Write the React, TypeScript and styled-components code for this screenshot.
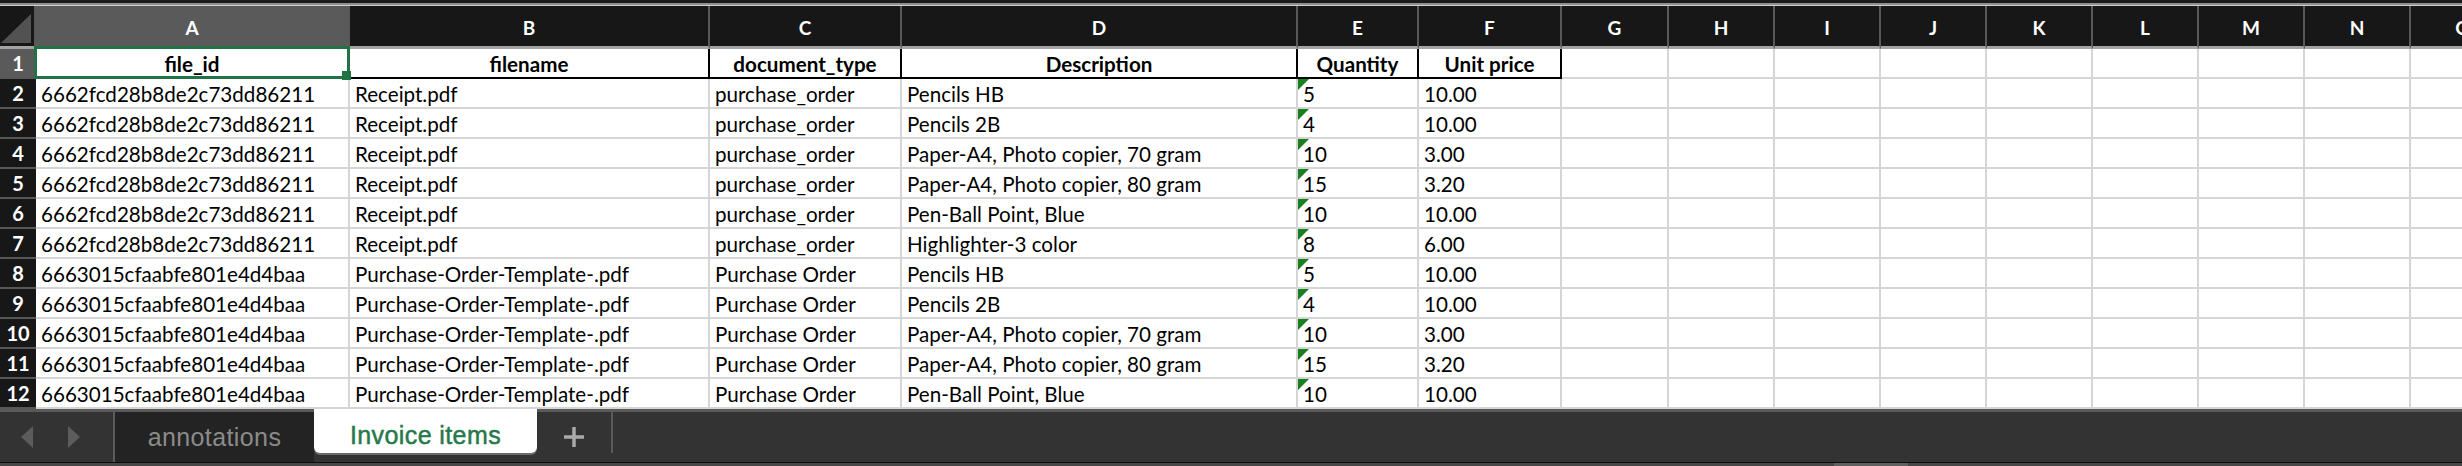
import React from "react";
import styled, { createGlobalStyle, css } from "styled-components";

const GlobalStyle = createGlobalStyle`
  *, *::before, *::after { box-sizing: border-box; }
  html, body { margin: 0; padding: 0; background: #333333; }
  body { width: 2462px; height: 466px; overflow: hidden; }
  #root { width: 2462px; height: 466px; }
`;

const Window = styled.div`
  display: flex;
  flex-direction: column;
  width: 2462px;
  height: 466px;
  overflow: hidden;
  background: #333333;
`;

const TopEdge = styled.div`
  flex: none;
  height: 6px;
  background: linear-gradient(#1b1b1b 0 3px, #8f8f8f 3px 5px, #cfcfcf 5px 6px);
`;

const Grid = styled.div`
  flex: none;
  display: grid;
  width: max-content;
  grid-template-columns: 36px 314px 360px 192px 396px 121px 143px 107px repeat(8, 106px);
  grid-template-rows: 43px repeat(12, 30px);
  background: #ffffff;
  font-family: Lato, "Noto Sans", sans-serif;
`;

const Corner = styled.div`
  display: flex;
  align-items: flex-end;
  justify-content: flex-end;
  padding: 0 3px 3px 0;
  background: #171717;
  border-right: 2px solid #595959;
  border-bottom: 3px solid #a3a3a3;
`;

const CornerMark = styled.span`
  width: 30px;
  height: 29px;
  background: #525252;
  clip-path: polygon(100% 0, 100% 100%, 0 100%);
`;

const ColHead = styled.div<{ $active?: boolean }>`
  display: flex;
  align-items: center;
  justify-content: center;
  padding-top: 2px;
  background: ${(p) => (p.$active ? "#5a5a5a" : "#171717")};
  color: #ffffff;
  font-size: 19px;
  font-weight: 700;
  border-right: 2px solid #595959;
  border-bottom: 3px solid ${(p) => (p.$active ? "#217346" : "#a3a3a3")};
`;

const RowHead = styled.div<{ $active?: boolean }>`
  display: flex;
  align-items: center;
  justify-content: center;
  background: ${(p) => (p.$active ? "#5a5a5a" : "#171717")};
  color: #ffffff;
  font-size: 20px;
  font-weight: 700;
  border-bottom: 2px solid #575757;
`;

const Cell = styled.div<{ $head?: boolean; $flag?: boolean; $selected?: boolean }>`
  position: relative;
  display: flex;
  align-items: center;
  padding: 1px 0 0 5px;
  white-space: nowrap;
  color: #000000;
  font-size: 20.6px;
  border-right: 2px solid #d5d5d5;
  border-bottom: 2px solid #d5d5d5;

  ${(p) =>
    p.$head &&
    css`
      justify-content: center;
      padding-left: 0;
      font-weight: 700;
      border-right-color: #000000;
      border-bottom-color: #000000;
    `}

  ${(p) =>
    p.$flag &&
    css`
      &::before {
        content: "";
        position: absolute;
        left: 0;
        top: 0;
        width: 11px;
        height: 11px;
        background: #1a7f1f;
        clip-path: polygon(0 0, 100% 0, 0 100%);
      }
    `}

  ${(p) =>
    p.$selected &&
    css`
      z-index: 3;
      &::after {
        content: "";
        position: absolute;
        left: -2px;
        top: -3px;
        right: -2px;
        bottom: -2px;
        border: 3px solid #217346;
      }
      &::before {
        content: "";
        position: absolute;
        right: -3px;
        bottom: -3px;
        width: 9px;
        height: 9px;
        background: #217346;
        z-index: 1;
      }
    `}
`;

const TabBar = styled.div`
  flex: none;
  box-sizing: content-box;
  height: 50px;
  display: flex;
  align-items: stretch;
  background: #333333;
  border-top: 3px solid #5a5a5a;
  border-bottom: 1px solid #0d0d0d;
  font-family: "Liberation Sans", Arial, sans-serif;
  font-size: 25px;
  letter-spacing: 0.4px;
`;

const Nav = styled.div`
  flex: none;
  width: 115px;
  display: flex;
  align-items: center;
  gap: 35px;
  padding-left: 21px;
  border-right: 2px solid #5a5a5a;
`;

const Arrow = styled.span<{ $dir: "left" | "right" }>`
  width: 12px;
  height: 22px;
  background: #5c5c5c;
  clip-path: ${(p) =>
    p.$dir === "left"
      ? "polygon(100% 0, 100% 100%, 0 50%)"
      : "polygon(0 0, 100% 50%, 0 100%)"};
`;

const Tab = styled.div`
  flex: none;
  width: 199px;
  display: flex;
  align-items: center;
  justify-content: center;
  background: #232323;
  color: #8b8b8b;
`;

const ActiveTab = styled.div`
  flex: none;
  width: 223px;
  height: 44px;
  margin-top: -3px;
  align-self: flex-start;
  display: flex;
  align-items: center;
  justify-content: center;
  padding-top: 9px;
  background: #ffffff;
  color: #26794a;
  -webkit-text-stroke: 0.5px #26794a;
  border-radius: 0 0 6px 6px;
  box-shadow: 0 2px 0 #6a6a6a;
`;

const AddButton = styled.div`
  flex: none;
  width: 76px;
  height: 41px;
  align-self: flex-start;
  display: flex;
  align-items: center;
  justify-content: center;
  padding-top: 9px;
  border-right: 2px solid #5a5a5a;
`;

const ScrollStrip = styled.div`
  flex: none;
  height: 3px;
  background: #474747;
  display: flex;
`;

const Thumb = styled.div`
  width: 74px;
  margin-left: 1834px;
  background: #606060;
`;

const letters = ["A", "B", "C", "D", "E", "F", "G", "H", "I", "J", "K", "L", "M", "N", "O"];
const headers = ["file_id", "filename", "document_type", "Description", "Quantity", "Unit price"];

const idA = "6662fcd28b8de2c73dd86211";
const idB = "6663015cfaabfe801e4d4baa";
const tpl = "Purchase-Order-Template-.pdf";

const rows: string[][] = [
  [idA, "Receipt.pdf", "purchase_order", "Pencils HB", "5", "10.00"],
  [idA, "Receipt.pdf", "purchase_order", "Pencils 2B", "4", "10.00"],
  [idA, "Receipt.pdf", "purchase_order", "Paper-A4, Photo copier, 70 gram", "10", "3.00"],
  [idA, "Receipt.pdf", "purchase_order", "Paper-A4, Photo copier, 80 gram", "15", "3.20"],
  [idA, "Receipt.pdf", "purchase_order", "Pen-Ball Point, Blue", "10", "10.00"],
  [idA, "Receipt.pdf", "purchase_order", "Highlighter-3 color", "8", "6.00"],
  [idB, tpl, "Purchase Order", "Pencils HB", "5", "10.00"],
  [idB, tpl, "Purchase Order", "Pencils 2B", "4", "10.00"],
  [idB, tpl, "Purchase Order", "Paper-A4, Photo copier, 70 gram", "10", "3.00"],
  [idB, tpl, "Purchase Order", "Paper-A4, Photo copier, 80 gram", "15", "3.20"],
  [idB, tpl, "Purchase Order", "Pen-Ball Point, Blue", "10", "10.00"],
];

const blankCount = letters.length - headers.length;

function Blanks() {
  return (
    <>
      {Array.from({ length: blankCount }, (_, i) => (
        <Cell key={i} />
      ))}
    </>
  );
}

export default function App() {
  return (
    <>
      <GlobalStyle />
      <Window>
        <TopEdge />
        <Grid>
          <Corner>
            <CornerMark />
          </Corner>
          {letters.map((l, i) => (
            <ColHead key={l} $active={i === 0}>
              {l}
            </ColHead>
          ))}

          <RowHead $active>1</RowHead>
          {headers.map((h, i) => (
            <Cell key={h} $head $selected={i === 0}>
              {h}
            </Cell>
          ))}
          <Blanks />

          {rows.map((r, ri) => (
            <React.Fragment key={ri}>
              <RowHead>{ri + 2}</RowHead>
              {r.map((v, ci) => (
                <Cell key={ci} $flag={ci === 4}>
                  {v}
                </Cell>
              ))}
              <Blanks />
            </React.Fragment>
          ))}
        </Grid>

        <TabBar>
          <Nav>
            <Arrow $dir="left" />
            <Arrow $dir="right" />
          </Nav>
          <Tab>annotations</Tab>
          <ActiveTab>Invoice items</ActiveTab>
          <AddButton>
            <svg width="20" height="20" viewBox="0 0 20 20" aria-hidden="true">
              <rect x="8.25" y="0" width="3.5" height="20" fill="#a9a9a9" />
              <rect x="0" y="8.25" width="20" height="3.5" fill="#a9a9a9" />
            </svg>
          </AddButton>
        </TabBar>
        <ScrollStrip>
          <Thumb />
        </ScrollStrip>
      </Window>
    </>
  );
}
